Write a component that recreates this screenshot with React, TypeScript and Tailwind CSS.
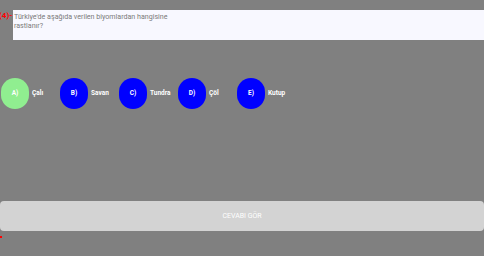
const options = [
  { key: 'A)', text: 'Çalı', selected: true },
  { key: 'B)', text: 'Savan', selected: false },
  { key: 'C)', text: 'Tundra', selected: false },
  { key: 'D)', text: 'Çöl', selected: false },
  { key: 'E)', text: 'Kutup', selected: false },
];

function App() {
  return (
    <div className="w-[484px] h-[256px] bg-[#808080] overflow-hidden" style={{ fontFamily: 'Roboto, sans-serif' }}>
      <div className="flex pt-[10px]">
        <div className="w-[13px] shrink-0 text-[8px] leading-[10px] text-[#ff0000] font-bold whitespace-nowrap relative z-10 -ml-[1px] mr-[1px] pt-[1px]">(4)-</div>
        <div className="flex-1 h-[30px] bg-[#f8f8ff] text-[7.1px] leading-[9px] text-[#7a7a7a] pl-[1px] pt-[2px]">
          Türkiye'de aşağıda verilen biyomlardan hangisine<br />rastlanır?
        </div>
      </div>
      <div className="flex mt-[38px] pl-[1px]">
        {options.map((o) => (
          <div key={o.key} className="w-[59px] flex items-center">
            <div className={`w-[28px] h-[31px] rounded-full flex items-center justify-center text-white text-[6.5px] font-bold ${o.selected ? 'bg-[#90ee90]' : 'bg-[#0000ff]'}`}>
              {o.key}
            </div>
            <span className="ml-[3px] text-white text-[6.5px] font-bold">{o.text}</span>
          </div>
        ))}
      </div>
      <div className="mt-[92px] h-[30px] rounded-[4px] bg-[#d3d3d3] flex items-center justify-center text-white text-[7px]">
        CEVABI GÖR
      </div>
      <div className="mt-[5px] w-[2px] h-[2px] bg-[#ff0000]"></div>
    </div>
  );
}

export default App;
